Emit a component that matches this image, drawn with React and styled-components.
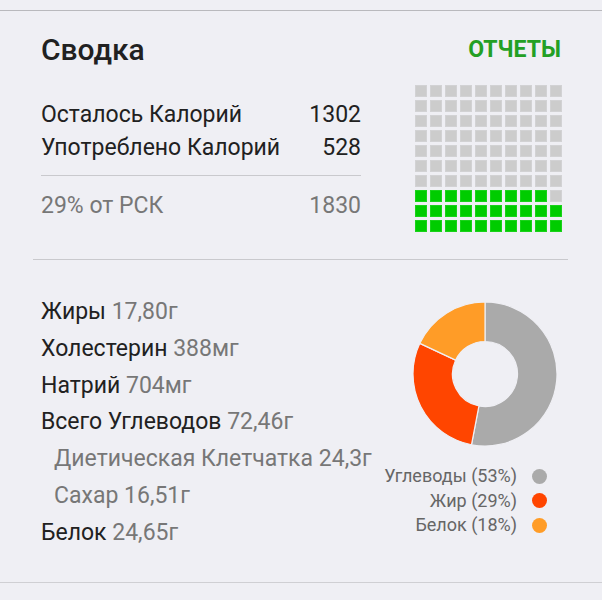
import React from 'react';
import styled, { createGlobalStyle } from 'styled-components';

const GlobalStyle = createGlobalStyle`
  body {
    margin: 0;
    background: #efeff4;
    font-family: Roboto, 'Liberation Sans', sans-serif;
  }
`;

const Card = styled.div`
  margin-top: 10px;
  border-top: 1px solid #b9b9bd;
  border-bottom: 1px solid #cfcfd3;
  padding: 22px 40px 0 41px;
  color: #212121;
`;

const Header = styled.div`
  display: flex;
  align-items: center;
  justify-content: space-between;
  height: 34px;
`;

const Title = styled.h2`
  margin: 0;
  font-size: 30px;
  line-height: 34px;
  font-weight: 500;
`;

const ReportsLink = styled.a`
  font-size: 23px;
  line-height: 34px;
  font-weight: 700;
  color: #23a024;
  text-decoration: none;
  margin-right: 1px;
`;

const TopSection = styled.div`
  display: flex;
  align-items: flex-start;
  justify-content: space-between;
  margin-top: 18px;
`;

const Totals = styled.div`
  width: 320px;
  padding-top: 13px;
`;

const TotalRow = styled.div`
  display: flex;
  justify-content: space-between;
  font-size: 23px;
  line-height: 33px;
  color: ${(p) => (p.muted ? '#777777' : '#212121')};
`;

const ThinRule = styled.hr`
  border: 0;
  border-top: 1px solid #c9c9cd;
  margin: ${(p) => p.margin || '0'};
`;

const Waffle = styled.div`
  display: grid;
  grid-template-columns: repeat(10, 12px);
  grid-auto-rows: 12px;
  gap: 3px;
`;

const Cell = styled.span`
  background: ${(p) => (p.on ? '#00cc00' : '#cccccc')};
  box-shadow: inset 0 0 0 1px ${(p) => (p.on ? '#1ad21a' : '#d2d2d4')};
`;

const LowerSection = styled.div`
  display: flex;
  align-items: flex-start;
  justify-content: space-between;
  padding-bottom: 30px;
`;

const Nutrients = styled.div`
  padding-top: 34px;
`;

const Nutrient = styled.div`
  font-size: 23px;
  line-height: 36.8px;
  white-space: nowrap;
  padding-left: ${(p) => (p.sub ? '13px' : '0')};
  color: ${(p) => (p.sub ? '#777777' : '#212121')};
`;

const Amount = styled.span`
  color: #777777;
`;

const ChartColumn = styled.div`
  display: flex;
  flex-direction: column;
  align-items: flex-end;
  padding-top: 42px;
  margin-right: 5px;
`;

const Legend = styled.div`
  margin-top: 18px;
  margin-right: 10px;
`;

const LegendRow = styled.div`
  display: flex;
  align-items: center;
  justify-content: flex-end;
  gap: 15px;
  font-size: 18px;
  line-height: 24.5px;
  color: #666666;
`;

const Dot = styled.span`
  width: 15px;
  height: 15px;
  border-radius: 50%;
  background: ${(p) => p.color};
`;

const macros = [
  { name: 'Углеводы', pct: 53, color: '#aaaaaa' },
  { name: 'Жир', pct: 29, color: '#ff4500' },
  { name: 'Белок', pct: 18, color: '#ff9c27' },
];

const nutrients = [
  { label: 'Жиры', value: '17,80г' },
  { label: 'Холестерин', value: '388мг' },
  { label: 'Натрий', value: '704мг' },
  { label: 'Всего Углеводов', value: '72,46г' },
  { label: 'Диетическая Клетчатка', value: '24,3г', sub: true },
  { label: 'Сахар', value: '16,51г', sub: true },
  { label: 'Белок', value: '24,65г' },
];

function point(cx, cy, r, frac) {
  const a = frac * Math.PI * 2 - Math.PI / 2;
  return [cx + r * Math.cos(a), cy + r * Math.sin(a)];
}

function sector(start, end, ro, ri) {
  const c = 72;
  const large = end - start > 0.5 ? 1 : 0;
  const [x1, y1] = point(c, c, ro, start);
  const [x2, y2] = point(c, c, ro, end);
  const [x3, y3] = point(c, c, ri, end);
  const [x4, y4] = point(c, c, ri, start);
  return `M${x1} ${y1} A${ro} ${ro} 0 ${large} 1 ${x2} ${y2} L${x3} ${y3} A${ri} ${ri} 0 ${large} 0 ${x4} ${y4} Z`;
}

function Donut() {
  let acc = 0;
  return (
    <svg width="144" height="144" viewBox="0 0 144 144">
      {macros.map((m) => {
        const start = acc;
        acc += m.pct / 100;
        return (
          <path
            key={m.name}
            d={sector(start, acc, 72, 32.5)}
            fill={m.color}
            stroke="#efeff4"
            strokeWidth="1.2"
          />
        );
      })}
    </svg>
  );
}

export default function App() {
  const consumed = 29;
  const cells = Array.from({ length: 100 }, (_, i) => {
    const row = Math.floor(i / 10);
    const col = i % 10;
    return (9 - row) * 10 + col < consumed;
  });

  return (
    <>
      <GlobalStyle />
      <Card>
        <Header>
          <Title>Сводка</Title>
          <ReportsLink href="#">ОТЧЕТЫ</ReportsLink>
        </Header>

        <TopSection>
          <Totals>
            <TotalRow>
              <span>Осталось Калорий</span>
              <span>1302</span>
            </TotalRow>
            <TotalRow>
              <span>Употреблено Калорий</span>
              <span>528</span>
            </TotalRow>
            <ThinRule margin="11px 0 13px" />
            <TotalRow muted>
              <span>29% от РСК</span>
              <span>1830</span>
            </TotalRow>
          </Totals>
          <Waffle>
            {cells.map((on, i) => (
              <Cell key={i} on={on} />
            ))}
          </Waffle>
        </TopSection>

        <ThinRule margin="27px -6px 0 -8px" />

        <LowerSection>
          <Nutrients>
            {nutrients.map((n) => (
              <Nutrient key={n.label} sub={n.sub}>
                {n.label} <Amount>{n.value}</Amount>
              </Nutrient>
            ))}
          </Nutrients>
          <ChartColumn>
            <Donut />
            <Legend>
              {macros.map((m) => (
                <LegendRow key={m.name}>
                  <span>
                    {m.name} ({m.pct}%)
                  </span>
                  <Dot color={m.color} />
                </LegendRow>
              ))}
            </Legend>
          </ChartColumn>
        </LowerSection>
      </Card>
    </>
  );
}
